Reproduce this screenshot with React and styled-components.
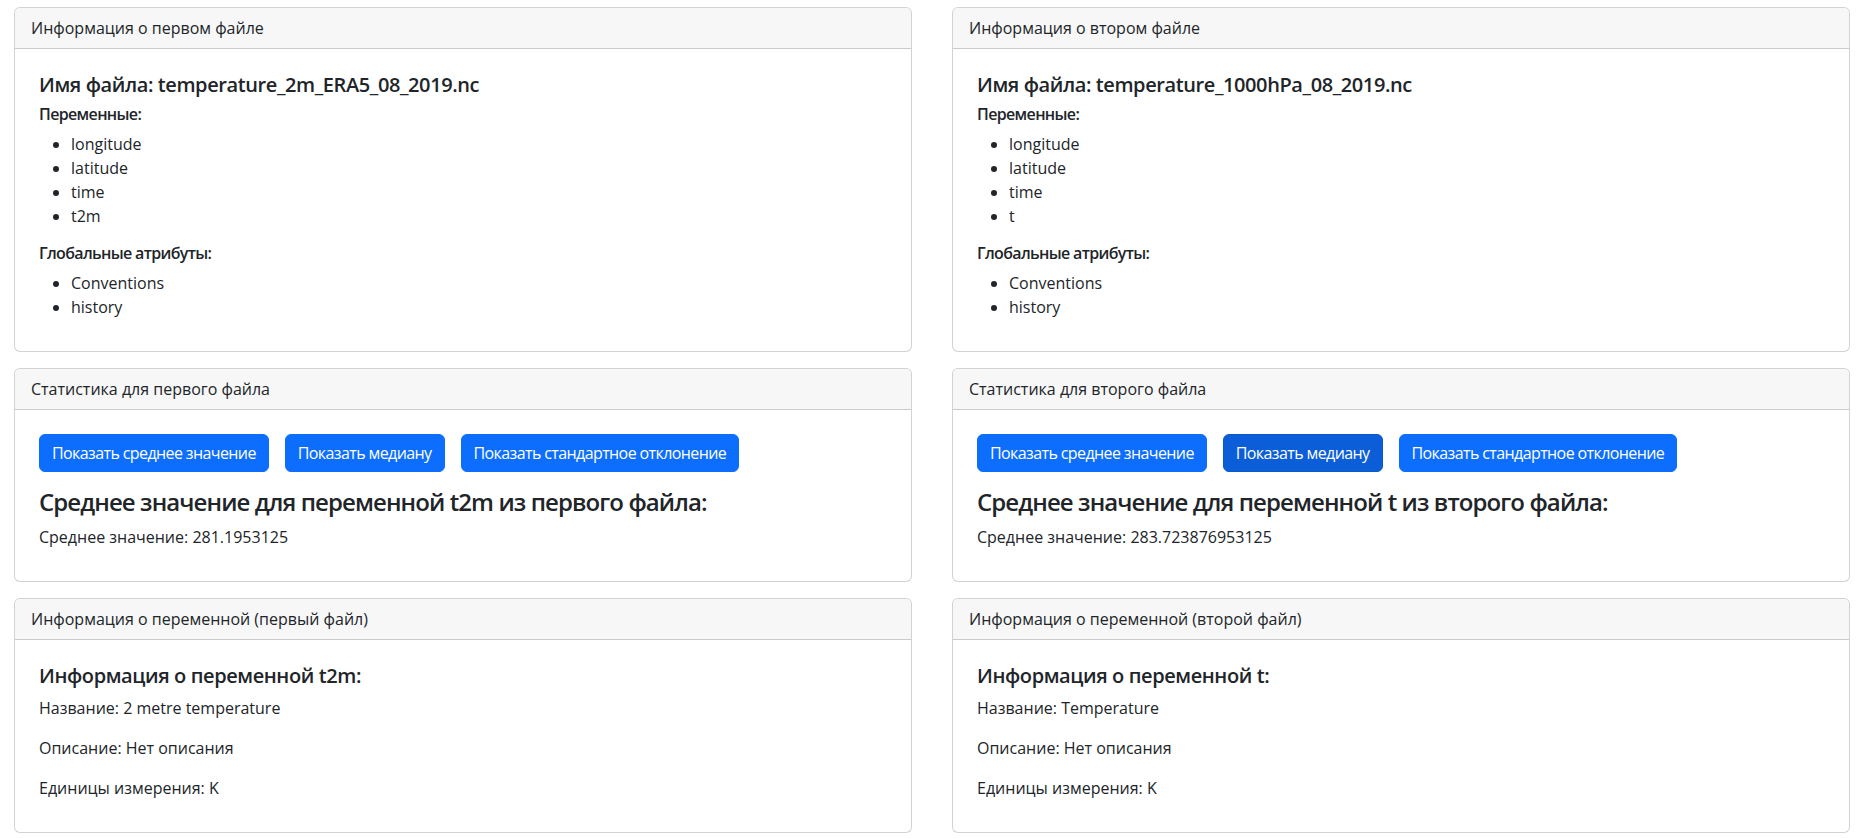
import React from "react";
import styled, { createGlobalStyle } from "styled-components";

const GlobalStyle = createGlobalStyle`
  * { box-sizing: border-box; }
  html, body { margin: 0; padding: 0; background: #fff; }
  body {
    font-family: "Open Sans", "Noto Sans", sans-serif;
    font-size: 16px;
    line-height: 1.5;
    color: #212529;
  }
`;

const Page = styled.div`
  display: grid;
  grid-template-columns: 1fr 1fr;
  column-gap: 40px;
  row-gap: 16px;
  padding: 7px 12px 0 14px;
`;

const Card = styled.section`
  display: flex;
  flex-direction: column;
  border: 1px solid rgba(0, 0, 0, 0.175);
  border-radius: 6px;
  background: #fff;
  overflow: hidden;
`;

const CardHeader = styled.div`
  padding: 8px 16px;
  background: #f7f7f7;
  border-bottom: 1px solid rgba(0, 0, 0, 0.175);
  font-size: 16px;
  line-height: 24px;
`;

const CardBody = styled.div`
  flex: 1;
  padding: 24px 24px 16px;
`;

const Title = styled.h5`
  margin: 0 0 8px;
  font-size: 20px;
  line-height: 1.2;
  font-weight: 600;
  letter-spacing: -0.4px;
`;

const BigTitle = styled.h4`
  margin: 0 0 8px;
  font-size: 24px;
  line-height: 1.2;
  font-weight: 600;
  letter-spacing: -0.9px;
`;

const SubTitle = styled.h6`
  margin: 0 0 8px;
  font-size: 16px;
  line-height: 1.2;
  font-weight: 600;
  letter-spacing: -0.65px;
`;

const List = styled.ul`
  margin: 0 0 16px;
  padding-left: 32px;
`;

const Text = styled.p`
  margin: 0 0 16px;
`;

const ButtonRow = styled.div`
  display: flex;
  gap: 16px;
  margin-bottom: 16px;
`;

const Button = styled.button`
  font-family: inherit;
  font-size: 16px;
  line-height: 24px;
  letter-spacing: -0.6px;
  padding: 6px 12px;
  color: #fff;
  background: ${(p) => (p.$active ? "#0b5ed7" : "#0d6efd")};
  border: 1px solid ${(p) => (p.$active ? "#0a58ca" : "#0d6efd")};
  border-radius: 6px;
  cursor: pointer;
`;

function FileInfo({ header, name, vars, attrs }) {
  return (
    <Card>
      <CardHeader>{header}</CardHeader>
      <CardBody>
        <Title>Имя файла: {name}</Title>
        <SubTitle>Переменные:</SubTitle>
        <List>
          {vars.map((v) => (
            <li key={v}>{v}</li>
          ))}
        </List>
        <SubTitle>Глобальные атрибуты:</SubTitle>
        <List>
          {attrs.map((v) => (
            <li key={v}>{v}</li>
          ))}
        </List>
      </CardBody>
    </Card>
  );
}

function Stats({ header, variable, which, value, active }) {
  return (
    <Card>
      <CardHeader>{header}</CardHeader>
      <CardBody>
        <ButtonRow>
          <Button $active={active === 0}>Показать среднее значение</Button>
          <Button $active={active === 1}>Показать медиану</Button>
          <Button $active={active === 2}>Показать стандартное отклонение</Button>
        </ButtonRow>
        <BigTitle>
          Среднее значение для переменной {variable} из {which} файла:
        </BigTitle>
        <Text>Среднее значение: {value}</Text>
      </CardBody>
    </Card>
  );
}

function VarInfo({ header, variable, name }) {
  return (
    <Card>
      <CardHeader>{header}</CardHeader>
      <CardBody>
        <Title>Информация о переменной {variable}:</Title>
        <Text>Название: {name}</Text>
        <Text>Описание: Нет описания</Text>
        <Text>Единицы измерения: K</Text>
      </CardBody>
    </Card>
  );
}

export default function App() {
  return (
    <>
      <GlobalStyle />
      <Page>
        <FileInfo
          header="Информация о первом файле"
          name="temperature_2m_ERA5_08_2019.nc"
          vars={["longitude", "latitude", "time", "t2m"]}
          attrs={["Conventions", "history"]}
        />
        <FileInfo
          header="Информация о втором файле"
          name="temperature_1000hPa_08_2019.nc"
          vars={["longitude", "latitude", "time", "t"]}
          attrs={["Conventions", "history"]}
        />
        <Stats
          header="Статистика для первого файла"
          variable="t2m"
          which="первого"
          value="281.1953125"
        />
        <Stats
          header="Статистика для второго файла"
          variable="t"
          which="второго"
          value="283.723876953125"
          active={1}
        />
        <VarInfo
          header="Информация о переменной (первый файл)"
          variable="t2m"
          name="2 metre temperature"
        />
        <VarInfo
          header="Информация о переменной (второй файл)"
          variable="t"
          name="Temperature"
        />
      </Page>
    </>
  );
}
